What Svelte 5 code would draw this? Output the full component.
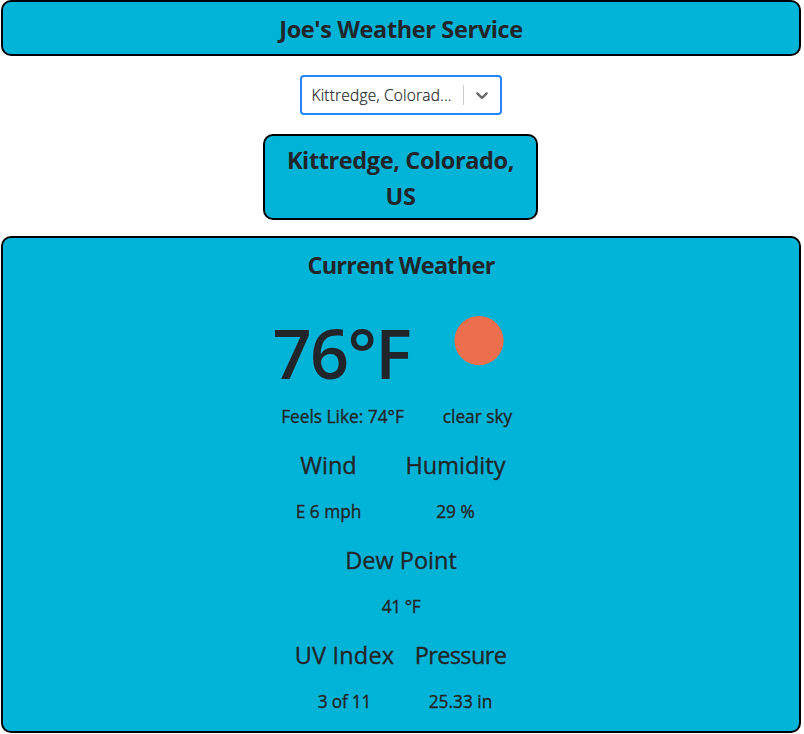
<script>
  const place = 'Kittredge, Colorado, US';
  const rows = [
    [
      { label: 'Wind', value: 'E 6 mph', width: 127, cls: 'wind' },
      { label: 'Humidity', value: '29 %', width: 127, cls: 'humidity' }
    ],
    [{ label: 'Dew Point', value: '41 °F', width: 160, cls: 'dew' }],
    [
      { label: 'UV Index', value: '3 of 11', width: 116, cls: 'uv' },
      { label: 'Pressure', value: '25.33 in', width: 116, cls: 'pressure' }
    ]
  ];
</script>

<div class="app">
  <header class="panel"><h1>Joe's Weather Service</h1></header>

  <div class="select">
    <span class="selected">Kittredge, Colorad...</span>
    <i class="separator"></i>
    <svg width="20" height="20" viewBox="0 0 20 20" aria-hidden="true">
      <path d="M4.516 7.548c0.436-0.446 1.043-0.481 1.576 0l3.908 3.747 3.908-3.747c0.533-0.481 1.141-0.446 1.574 0 0.436 0.445 0.408 1.197 0 1.615-0.406 0.418-4.695 4.502-4.695 4.502-0.217 0.223-0.502 0.335-0.787 0.335s-0.57-0.112-0.789-0.335c0 0-4.287-4.084-4.695-4.502s-0.436-1.17 0-1.615z" />
    </svg>
  </div>

  <section class="panel place"><h2>{place}</h2></section>

  <main class="panel card">
    <h2 class="current">Current Weather</h2>
    <div class="now">
      <div class="temp">
        <strong>76°F</strong>
        <p>Feels Like: 74°F</p>
      </div>
      <div class="sky">
        <svg width="50" height="84" viewBox="0 0 50 84" aria-hidden="true"><circle cx="25" cy="30.6" r="24.6" fill="#ec6e4c" /></svg>
        <p>clear sky</p>
      </div>
    </div>
    {#each rows as row}
      <div class="row">
        {#each row as item}
          <div class="stat {item.cls}" style:width="{item.width}px">
            <h3>{item.label}</h3>
            <p>{item.value}</p>
          </div>
        {/each}
      </div>
    {/each}
  </main>
</div>

<style>
  :global(body) { margin: 0; background: #fff; }
  .app {
    box-sizing: border-box;
    width: 802px;
    padding: 0 1px;
    font-family: "Open Sans", "Noto Sans", sans-serif;
    color: #212529;
    text-align: center;
  }
  h1, h2, h3, p { margin: 0; }
  .panel {
    box-sizing: border-box;
    background: #00b4d8;
    border: 2px solid #000;
    border-radius: 10px;
  }
  header { height: 56px; padding-top: 9px; }
  h1, h2 { font-size: 23.5px; font-weight: 700; line-height: 36px; letter-spacing: -0.38px; }
  .current { letter-spacing: -0.75px; }
  .select {
    box-sizing: border-box;
    width: 202px;
    height: 40px;
    margin: 19px 0 0 299px;
    border: 2px solid #2684ff;
    border-radius: 4px;
    display: flex;
    align-items: center;
    padding-left: 9.5px;
    background: #fff;
  }
  .selected {
    flex: 0 0 151.5px;
    text-align: left;
    font-size: 15.5px;
    font-weight: 300;
    letter-spacing: 0.18px;
    -webkit-text-stroke: 0.2px #212529;
    white-space: nowrap;
  }
  .separator { width: 1px; height: 20px; background: #ccc; }
  .select svg { margin-left: 8px; fill: #666; }
  .place { width: 275px; height: 86px; margin: 19px 0 0 262px; padding: 6px 10px 0; }
  .card { height: 497px; margin-top: 16px; padding-top: 9px; }
  .now { display: flex; justify-content: center; margin-top: 27px; }
  .temp, .sky { width: 136px; }
  .temp { margin-left: 19px; }
  .temp strong {
    display: block;
    margin-left: -2.5px;
    padding-top: 1px;
    font-size: 68.5px;
    line-height: 84px;
    font-weight: 600;
    letter-spacing: -1.7px;
    white-space: nowrap;
  }
  .sky svg { display: block; margin: 0 auto; }
  .sky p { margin-top: 10px; position: relative; left: -1px; }
  p, h3 { font-weight: 400; white-space: nowrap; -webkit-text-stroke: 0.35px #212529; }
  p { font-size: 17.3px; line-height: 26px; }
  .temp p { margin-top: 9px; }
  .row { display: flex; justify-content: center; margin-top: 17px; }
  .row + .row { margin-top: 17px; }
  h3 { font-size: 23.5px; line-height: 36px; }
  .stat p { margin-top: 16px; }
  .wind { margin-left: -18px; }
  .dew p { letter-spacing: -0.4px; }
  .uv { margin-left: 3px; }
  .uv h3 { letter-spacing: 0.2px; }
  .uv p { letter-spacing: -0.2px; }
  .pressure h3 { letter-spacing: -0.6px; }
</style>
